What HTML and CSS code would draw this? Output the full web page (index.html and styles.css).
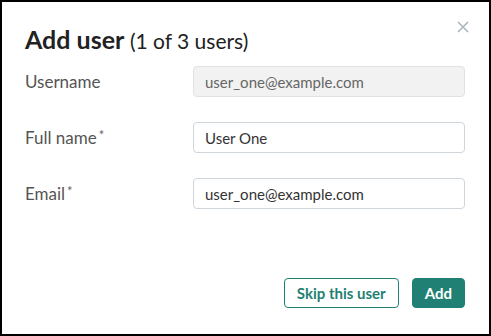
FILE: index.html
```html
<!DOCTYPE html>
<html lang="en">
<head>
    <meta charset="UTF-8">
    <meta name="viewport" content="width=device-width, initial-scale=1.0">
    <title>Add user</title>
    <link rel="stylesheet" href="styles.css">
</head>
<body>

    <!-- Add user dialog -->
    <div class="modal">
        <button class="close" aria-label="Close">
            <svg width="12" height="12" viewBox="0 0 12 12">
                <path d="M1 1 L11 11 M11 1 L1 11" stroke="#a9b8bf" stroke-width="1.6" fill="none"/>
            </svg>
        </button>

        <h2 class="title">Add user <span>(1 of 3 users)</span></h2>

        <form class="fields">
            <div class="row">
                <label for="username">Username</label>
                <input id="username" type="text" value="user_one@example.com" readonly>
            </div>
            <div class="row">
                <label for="fullname">Full name<sup>*</sup></label>
                <input id="fullname" type="text" value="User One">
            </div>
            <div class="row">
                <label for="email">Email<sup>*</sup></label>
                <input id="email" type="text" value="user_one@example.com">
            </div>
        </form>

        <div class="actions">
            <button class="btn btn-outline">Skip this user</button>
            <button class="btn btn-primary">Add</button>
        </div>
    </div>

</body>
</html>
```

FILE: styles.css
```css
body {
    font-family: Lato, "Noto Sans", sans-serif;
    margin: 0;
    padding: 0;
    background: #fff;
}
.modal {
    position: relative;
    box-sizing: border-box;
    width: 491px;
    height: 336px;
    border: 2px solid #000;
    padding: 0 24px 26px 23px;
    display: flex;
    flex-direction: column;
    background: #fff;
}
.close {
    position: absolute;
    top: 19px;
    right: 20px;
    border: none;
    background: none;
    padding: 0;
    width: 12px;
    height: 12px;
    cursor: pointer;
}
.close svg {
    display: block;
}
.title {
    margin: 21px 0 0;
    font-size: 25px;
    line-height: 32px;
    font-weight: bold;
    color: #222;
}
.title span {
    font-weight: normal;
    font-size: 21px;
}

/* Form rows */
.fields {
    margin-top: 9px;
    display: flex;
    flex-direction: column;
    gap: 25px;
}
.row {
    display: grid;
    grid-template-columns: 168px 1fr;
    align-items: center;
}
.row label {
    font-size: 17px;
    color: #555;
}
.row label sup {
    font-size: 13px;
    vertical-align: top;
    position: relative;
    top: 0;
    margin-left: 2px;
    color: #666;
}
.row input {
    box-sizing: border-box;
    height: 31px;
    width: 100%;
    padding: 0 11px;
    border: 1px solid #cfd6db;
    border-radius: 4px;
    font-family: inherit;
    font-size: 15px;
    color: #333;
    background: #fff;
}
.row input[readonly] {
    background: #f2f2f2;
    border-color: #e2e2e2;
    color: #666;
}

/* Buttons */
.actions {
    margin-top: auto;
    display: flex;
    justify-content: flex-end;
    gap: 13px;
}
.btn {
    box-sizing: border-box;
    height: 30px;
    padding: 0 12px;
    border-radius: 4px;
    font-family: inherit;
    font-size: 15px;
    font-weight: bold;
    cursor: pointer;
}
.btn-outline {
    background: #fff;
    color: #1f8073;
    border: 1px solid #1f8073;
}
.btn-primary {
    background: #1f8073;
    color: #fff;
    border: 1px solid #1f8073;
    padding: 0 12px;
}
```
